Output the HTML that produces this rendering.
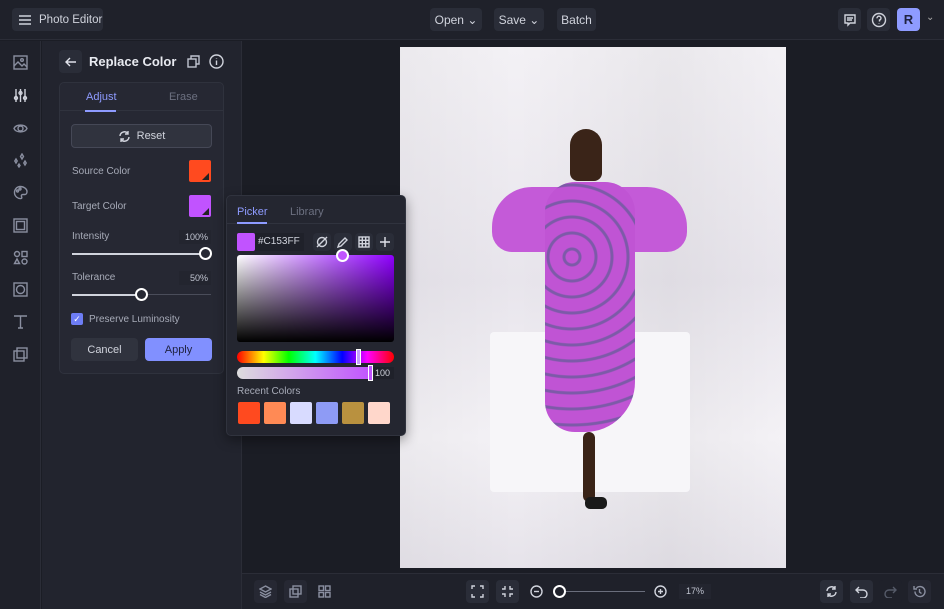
<!DOCTYPE html>
<html><head><style>
*{box-sizing:border-box;margin:0;padding:0}
body{width:944px;height:609px;background:#1b1d25;font-family:"Liberation Sans",sans-serif;position:relative;overflow:hidden;color:#d7d9e2}
.abs{position:absolute}
.btn{position:absolute;background:#2a2d38;border-radius:4px;font-size:12px;color:#d0d3dc;display:flex;align-items:center;justify-content:center;white-space:nowrap}
svg{stroke:#8a8fa0;fill:none;stroke-width:1.4}
.lbl{position:absolute;font-size:10px;color:#a7abb8;white-space:nowrap}
</style></head><body>
<div class="abs" style="left:0;top:0;width:944px;height:40px;background:#1f212a;border-bottom:1px solid #2b2d37"></div>
<div class="btn" style="left:12px;top:8px;width:91px;height:23px;justify-content:flex-start;padding-left:6px;gap:7px;font-size:11.5px">
<svg width="14" height="12" style="stroke:#d0d3dc"><path d="M1 2h12M1 6h12M1 10h12"/></svg>Photo Editor</div>
<div class="btn" style="left:430px;top:8px;width:52px;height:23px">Open&nbsp;⌄</div>
<div class="btn" style="left:494px;top:8px;width:50px;height:23px">Save&nbsp;⌄</div>
<div class="btn" style="left:557px;top:8px;width:39px;height:23px">Batch</div>
<div class="btn" style="left:838px;top:8px;width:23px;height:23px"><svg width="14" height="14" style="stroke:#d0d3dc"><path d="M2 2h10v8H7l-2 2v-2H2z M4 5h6M4 7h5"/></svg></div>
<div class="btn" style="left:867px;top:8px;width:23px;height:23px"><svg width="16" height="16" style="stroke:#d0d3dc"><circle cx="8" cy="8" r="6.5"/><path d="M6 6.3a2 2 0 1 1 2.5 1.8V9.5M8 11.2v.5"/></svg></div>
<div class="btn" style="left:897px;top:8px;width:23px;height:23px;background:#8e9bff;color:#1f2240;font-weight:bold;font-size:13px">R</div>
<div class="abs" style="left:926px;top:12px;font-size:10px;color:#aaa">⌄</div>
<div class="abs" style="left:0;top:41px;width:41px;height:568px;background:#1f212a;border-right:1px solid #2b2d37"></div>
<svg class="abs" style="left:13px;top:55px" width="15" height="15"><rect x="1" y="1" width="13" height="13"/><path d="M1 11l4-4 4 4 2-2 3 3"/><circle cx="9" cy="5" r="1.3"/></svg>
<svg class="abs" style="left:13px;top:88px;stroke:#d0d3dc" width="15" height="15"><path d="M3 1v13M7.5 1v13M12 1v13"/><circle cx="3" cy="10" r="1.5"/><circle cx="7.5" cy="5" r="1.5"/><circle cx="12" cy="10" r="1.5"/></svg>
<svg class="abs" style="left:13px;top:121px" width="15" height="15"><path d="M1 7.5C3 3 12 3 14 7.5 12 12 3 12 1 7.5z"/><circle cx="7.5" cy="7.5" r="2.5"/></svg>
<svg class="abs" style="left:13px;top:153px" width="15" height="15"><path d="M9 1l1.5 2.5L9 6 7.5 3.5zM3 6l1.2 2L3 10 1.8 8zM12 8l1.2 2L12 12l-1.2-2zM6 11l1 1.5L6 14l-1-1.5z"/></svg>
<svg class="abs" style="left:13px;top:185px" width="15" height="15"><path d="M7 1.5a6 6 0 1 0 1 12c1 0 1-1 .5-2s0-2 1.5-2h2c1 0 2-1 2-3C14 4 11 1.5 7 1.5z"/><circle cx="4.5" cy="6" r="1"/><circle cx="7" cy="4" r="1"/></svg>
<svg class="abs" style="left:13px;top:218px" width="15" height="15"><rect x="1" y="1" width="13" height="13"/><rect x="3.5" y="3.5" width="8" height="8"/></svg>
<svg class="abs" style="left:13px;top:250px" width="15" height="15"><circle cx="4" cy="4" r="2.5"/><rect x="9" y="1.5" width="5" height="5"/><path d="M4 9l2.5 4.5h-5z"/><circle cx="11.5" cy="11.5" r="2.5"/></svg>
<svg class="abs" style="left:13px;top:282px" width="15" height="15"><rect x="1" y="1" width="13" height="13"/><circle cx="7.5" cy="7.5" r="4"/></svg>
<svg class="abs" style="left:13px;top:314px" width="15" height="15"><path d="M1 2h13M7.5 2v12M5 14h5"/></svg>
<svg class="abs" style="left:13px;top:347px" width="15" height="15"><rect x="1" y="4" width="10" height="10"/><rect x="4" y="1" width="10" height="10"/></svg>
<div class="abs" style="left:42px;top:41px;width:200px;height:568px;background:#22242e;border-right:1px solid #2b2d37"></div>
<div class="btn" style="left:59px;top:50px;width:23px;height:23px;background:#2a2d38"><svg width="12" height="12" style="stroke:#e0e2ea"><path d="M11 6H1M5 2L1 6l4 4"/></svg></div>
<div class="abs" style="left:89px;top:54px;font-size:13px;font-weight:bold;color:#e8eaf0">Replace Color</div>
<svg class="abs" style="left:187px;top:55px;stroke:#c0c4d0" width="13" height="13"><rect x="1" y="4" width="8" height="8"/><path d="M4 4V1h8v8H9"/></svg>
<svg class="abs" style="left:209px;top:54px;stroke:#d0d3dc" width="15" height="15"><circle cx="7.5" cy="7.5" r="6.5"/><path d="M7.5 6.5v4.5M7.5 4v.5"/></svg>
<div class="abs" style="left:59px;top:82px;width:165px;height:292px;background:#262833;border:1px solid #2f323d;border-radius:5px"></div>
<div class="abs" style="left:60px;top:110px;width:163px;height:1px;background:#30333e"></div>
<div class="abs" style="left:86px;top:91px;font-size:11px;color:#8e9bff">Adjust</div>
<div class="abs" style="left:85px;top:110px;width:31px;height:2px;background:#8e9bff"></div>
<div class="abs" style="left:169px;top:91px;font-size:11px;color:#6c7080">Erase</div>
<div class="btn" style="left:71px;top:124px;width:141px;height:24px;border:1px solid #454856;background:#30333e;gap:6px;font-size:11px"><svg width="13" height="13" style="stroke:#d0d3dc"><path d="M2 6a4.5 4.5 0 0 1 8-2.5M11 7a4.5 4.5 0 0 1-8 2.5M10 1v3H7M3 12V9h3"/></svg>Reset</div>
<div class="lbl" style="left:72px;top:166px">Source Color</div>
<div class="abs" style="left:189px;top:160px;width:22px;height:22px;background:#ff4a1f;border-radius:2px"><div class="abs" style="right:2px;bottom:2px;width:0;height:0;border-left:7px solid transparent;border-bottom:7px solid #222"></div></div>
<div class="lbl" style="left:72px;top:201px">Target Color</div>
<div class="abs" style="left:189px;top:195px;width:22px;height:22px;background:#c153ff;border-radius:2px"><div class="abs" style="right:2px;bottom:2px;width:0;height:0;border-left:7px solid transparent;border-bottom:7px solid #222"></div></div>
<div class="lbl" style="left:72px;top:231px">Intensity</div>
<div class="abs" style="left:179px;top:230px;width:32px;height:14px;background:#23252f;font-size:9px;color:#c0c4d0;text-align:right;padding:2px 3px">100%</div>
<div class="abs" style="left:72px;top:253px;width:134px;height:2px;background:#d0d3dc"></div>
<div class="abs" style="left:199px;top:247px;width:13px;height:13px;border-radius:50%;border:2px solid #fff;background:#262833"></div>
<div class="lbl" style="left:72px;top:272px">Tolerance</div>
<div class="abs" style="left:179px;top:271px;width:32px;height:14px;background:#23252f;font-size:9px;color:#c0c4d0;text-align:right;padding:2px 3px">50%</div>
<div class="abs" style="left:72px;top:294px;width:139px;height:1px;background:#4a4d5a"></div>
<div class="abs" style="left:72px;top:294px;width:70px;height:2px;background:#d0d3dc"></div>
<div class="abs" style="left:135px;top:288px;width:13px;height:13px;border-radius:50%;border:2px solid #fff;background:#262833"></div>
<div class="abs" style="left:71px;top:313px;width:12px;height:12px;background:#6d7df5;border-radius:2px;color:#fff;font-size:9px;text-align:center;line-height:12px">✓</div>
<div class="lbl" style="left:89px;top:314px">Preserve Luminosity</div>
<div class="btn" style="left:71px;top:338px;width:67px;height:23px;background:#30333e;font-size:11px">Cancel</div>
<div class="btn" style="left:145px;top:338px;width:67px;height:23px;background:#8190ff;color:#1f2240;font-size:11px">Apply</div>
<div class="abs" style="left:400px;top:47px;width:386px;height:521px;background:linear-gradient(90deg,rgba(0,0,0,.03),rgba(255,255,255,0) 30%,rgba(0,0,0,.04) 70%,rgba(255,255,255,0)),linear-gradient(180deg,#f3f1f5 0%,#e8e5ec 45%,#f4f2f6 75%,#e6e3ea 100%);overflow:hidden">
<div class="abs" style="left:90px;top:285px;width:200px;height:160px;background:#f7f6f9;border-radius:4px"></div>
<div class="abs" style="left:170px;top:82px;width:32px;height:52px;background:#3a2418;border-radius:16px 16px 8px 8px"></div>
<div class="abs" style="left:92px;top:140px;width:195px;height:65px;background:#c45ad8;border-radius:40px 40px 20px 20px"></div>
<div class="abs" style="left:145px;top:135px;width:90px;height:250px;background:repeating-radial-gradient(circle at 30% 30%,#c054d4 0 6px,#7d5aa8 7px 9px,#c054d4 10px 16px);border-radius:30px 30px 50px 30px"></div>
<div class="abs" style="left:183px;top:385px;width:12px;height:70px;background:#3a2418;border-radius:6px"></div>
<div class="abs" style="left:185px;top:450px;width:22px;height:12px;background:#1a1a1a;border-radius:5px"></div>
</div>
<div class="abs" style="left:226px;top:195px;width:180px;height:241px;background:#242630;border:1px solid #30333e;border-radius:5px;box-shadow:0 4px 12px rgba(0,0,0,.4)"></div>
<div class="abs" style="left:227px;top:223px;width:178px;height:1px;background:#30333e"></div>
<div class="abs" style="left:237px;top:206px;font-size:11px;color:#8e9bff">Picker</div>
<div class="abs" style="left:237px;top:222px;width:30px;height:2px;background:#8e9bff"></div>
<div class="abs" style="left:290px;top:206px;font-size:11px;color:#6c7080">Library</div>
<div class="abs" style="left:237px;top:233px;width:18px;height:18px;background:#c153ff;border-radius:2px"></div>
<div class="abs" style="left:255px;top:233px;width:49px;height:18px;background:#1f212a;font-size:10px;color:#d0d3dc;padding:3px 3px">#C153FF</div>
<div class="btn" style="left:313px;top:233px;width:18px;height:18px"><svg width="12" height="12" style="stroke:#d0d3dc"><circle cx="6" cy="6" r="4.5"/><path d="M1 11L11 1"/></svg></div>
<div class="btn" style="left:334px;top:233px;width:18px;height:18px"><svg width="12" height="12" style="stroke:#d0d3dc"><path d="M1 11l1-3 6-6 2 2-6 6z"/></svg></div>
<div class="btn" style="left:355px;top:233px;width:18px;height:18px"><svg width="12" height="12" style="stroke:#d0d3dc"><rect x="1" y="1" width="10" height="10"/><path d="M4.3 1v10M7.7 1v10M1 4.3h10M1 7.7h10"/></svg></div>
<div class="btn" style="left:376px;top:233px;width:18px;height:18px"><svg width="12" height="12" style="stroke:#e0e2ea"><path d="M6 1v10M1 6h10"/></svg></div>
<div class="abs" style="left:237px;top:255px;width:157px;height:87px;border-radius:3px;background:linear-gradient(to bottom,rgba(0,0,0,0),#000),linear-gradient(to right,#fff,#8f00ff)"></div>
<div class="abs" style="left:336px;top:249px;width:13px;height:13px;border-radius:50%;border:2px solid #fff;background:#c153ff"></div>
<div class="abs" style="left:237px;top:351px;width:157px;height:12px;border-radius:6px;background:linear-gradient(to right,#f00,#ff0 17%,#0f0 33%,#0ff 50%,#00f 67%,#f0f 83%,#f00)"></div>
<div class="abs" style="left:356px;top:349px;width:5px;height:16px;border:1px solid #fff;background:#c6a0ff"></div>
<div class="abs" style="left:237px;top:367px;width:134px;height:12px;border-radius:6px 0 0 6px;background:linear-gradient(to right,#ddd,#c153ff)"></div>
<div class="abs" style="left:368px;top:365px;width:5px;height:16px;border:1px solid #fff;background:#c153ff"></div>
<div class="abs" style="left:374px;top:367px;width:20px;height:12px;background:#1f212a;font-size:9px;color:#d0d3dc;padding:1px 1px">100</div>
<div class="abs" style="left:237px;top:386px;font-size:10px;color:#a7abb8">Recent Colors</div>
<div class="abs" style="left:238px;top:402px;display:flex;gap:4px">
<div style="width:22px;height:22px;background:#ff4a1f;border-radius:2px"></div>
<div style="width:22px;height:22px;background:#ff8a55;border-radius:2px"></div>
<div style="width:22px;height:22px;background:#d8dbff;border-radius:2px"></div>
<div style="width:22px;height:22px;background:#8e9bf5;border-radius:2px"></div>
<div style="width:22px;height:22px;background:#b9913f;border-radius:2px"></div>
<div style="width:22px;height:22px;background:#ffd7cb;border-radius:2px"></div>
</div>
<div class="abs" style="left:242px;top:573px;width:702px;height:36px;background:#1f212a;border-top:1px solid #2b2d37"></div>
<div class="btn" style="left:254px;top:580px;width:23px;height:23px;background:#262833"><svg width="13" height="13"><path d="M6.5 1L12 4 6.5 7 1 4zM1 7l5.5 3L12 7M1 9.5l5.5 3 5.5-3"/></svg></div>
<div class="btn" style="left:284px;top:580px;width:23px;height:23px;background:#262833"><svg width="13" height="13"><rect x="1" y="4" width="8" height="8"/><rect x="4" y="1" width="8" height="8"/></svg></div>
<div class="btn" style="left:313px;top:580px;width:23px;height:23px;background:#1f212a"><svg width="13" height="13"><rect x="1" y="1" width="4.5" height="4.5"/><rect x="7.5" y="1" width="4.5" height="4.5"/><rect x="1" y="7.5" width="4.5" height="4.5"/><rect x="7.5" y="7.5" width="4.5" height="4.5"/></svg></div>
<div class="btn" style="left:466px;top:580px;width:23px;height:23px"><svg width="13" height="13" style="stroke:#d0d3dc"><path d="M1 4V1h3M9 1h3v3M12 9v3H9M4 12H1V9"/></svg></div>
<div class="btn" style="left:496px;top:580px;width:23px;height:23px"><svg width="13" height="13" style="stroke:#d0d3dc"><path d="M1 4h3V1M9 1v3h3M12 9H9v3M4 12V9H1"/></svg></div>
<svg class="abs" style="left:530px;top:585px;stroke:#d0d3dc" width="13" height="13"><circle cx="6.5" cy="6.5" r="5.5"/><path d="M4 6.5h5"/></svg>
<div class="abs" style="left:560px;top:591px;width:85px;height:1px;background:#6a6e7c"></div>
<div class="abs" style="left:553px;top:585px;width:13px;height:13px;border-radius:50%;border:2px solid #fff;background:#1f212a"></div>
<svg class="abs" style="left:654px;top:585px;stroke:#d0d3dc" width="13" height="13"><circle cx="6.5" cy="6.5" r="5.5"/><path d="M4 6.5h5M6.5 4v5"/></svg>
<div class="abs" style="left:679px;top:584px;width:32px;height:15px;background:#23252f;font-size:9px;color:#c0c4d0;text-align:center;padding-top:2px">17%</div>
<div class="btn" style="left:820px;top:580px;width:23px;height:23px"><svg width="13" height="13" style="stroke:#d0d3dc"><path d="M2 6a4.5 4.5 0 0 1 8-2.5M11 7a4.5 4.5 0 0 1-8 2.5M10 1v3H7M3 12V9h3"/></svg></div>
<div class="btn" style="left:850px;top:580px;width:23px;height:23px"><svg width="13" height="13" style="stroke:#d0d3dc"><path d="M4 2L1 5l3 3M1 5h7a4 4 0 0 1 0 8H5"/></svg></div>
<div class="btn" style="left:879px;top:580px;width:23px;height:23px;background:#1f212a"><svg width="13" height="13" style="stroke:#555a68"><path d="M9 2l3 3-3 3M12 5H5a4 4 0 0 0 0 8h3"/></svg></div>
<div class="btn" style="left:908px;top:580px;width:23px;height:23px;background:#262833"><svg width="13" height="13"><path d="M2 6.5a5 5 0 1 0 1.5-3.5M1 1v3h3M6.5 4v3l2 1.5"/></svg></div>
</body></html>
